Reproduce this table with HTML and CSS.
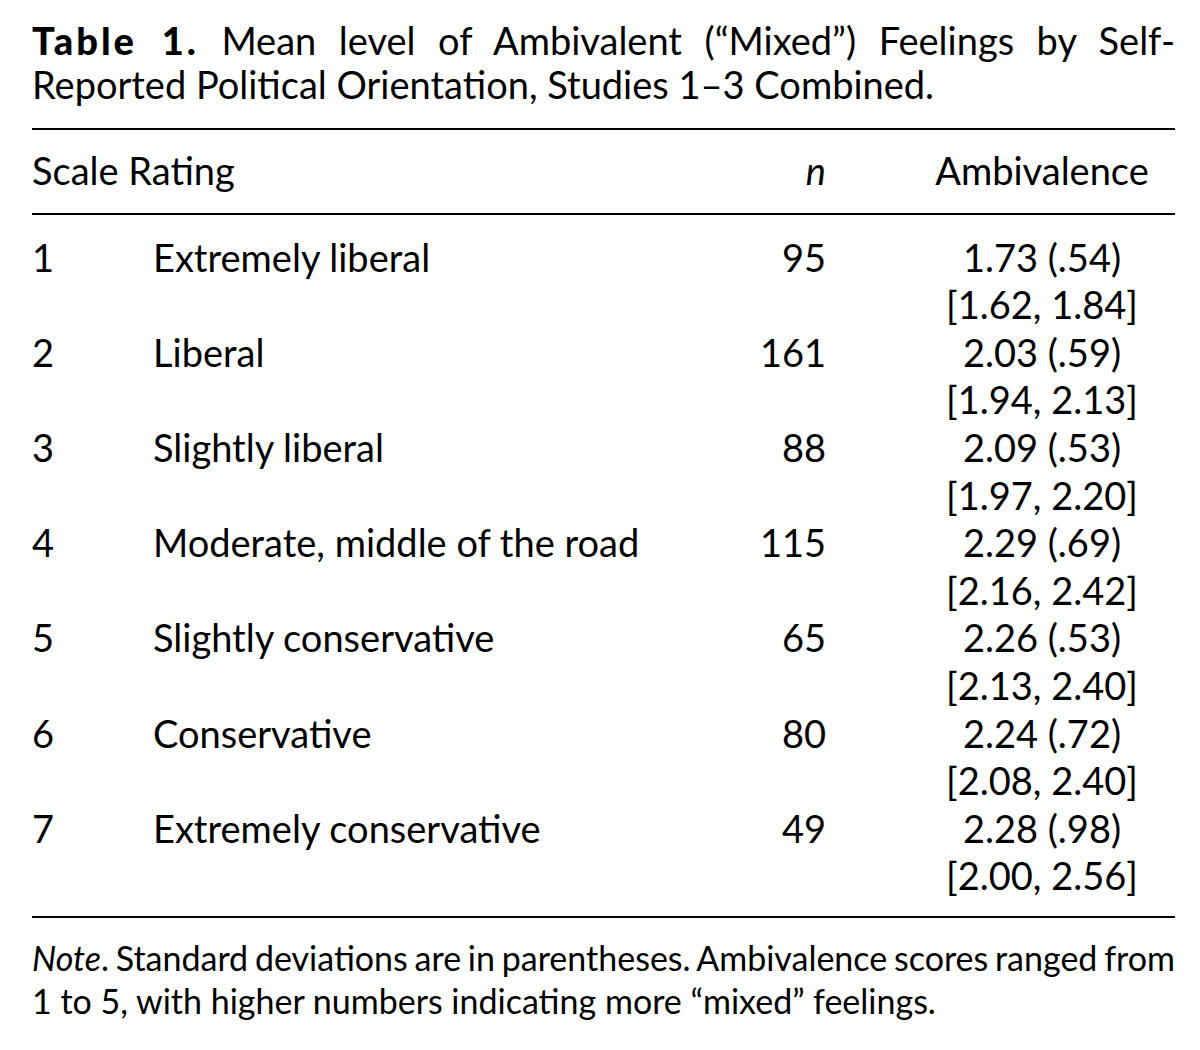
FILE: index.html
```html
<!DOCTYPE html>
<html lang="en">
<head>
<meta charset="utf-8">
<title>Table 1</title>
<link rel="stylesheet" href="styles.css">
</head>
<body>
<div class="page">
  <p class="caption"><span class="line just"><span class="label">Table 1.</span> Mean level of Ambivalent (“Mixed”) Feelings by Self-</span><span class="line">Reported Political Orientation, Studies 1–3 Combined.</span></p>
  <div class="table">
    <div class="row head">
      <div class="c-scale">Scale Rating</div>
      <div class="c-n"><i>n</i></div>
      <div class="c-amb">Ambivalence</div>
    </div>
    <div class="body">
      <div class="row">
        <div class="c-num">1</div>
        <div class="c-label">Extremely liberal</div>
        <div class="c-n">95</div>
        <div class="c-amb">1.73 (.54)<br>[1.62, 1.84]</div>
      </div>
      <div class="row">
        <div class="c-num">2</div>
        <div class="c-label">Liberal</div>
        <div class="c-n">161</div>
        <div class="c-amb">2.03 (.59)<br>[1.94, 2.13]</div>
      </div>
      <div class="row">
        <div class="c-num">3</div>
        <div class="c-label">Slightly liberal</div>
        <div class="c-n">88</div>
        <div class="c-amb">2.09 (.53)<br>[1.97, 2.20]</div>
      </div>
      <div class="row">
        <div class="c-num">4</div>
        <div class="c-label">Moderate, middle of the road</div>
        <div class="c-n">115</div>
        <div class="c-amb">2.29 (.69)<br>[2.16, 2.42]</div>
      </div>
      <div class="row">
        <div class="c-num">5</div>
        <div class="c-label">Slightly conservative</div>
        <div class="c-n">65</div>
        <div class="c-amb">2.26 (.53)<br>[2.13, 2.40]</div>
      </div>
      <div class="row">
        <div class="c-num">6</div>
        <div class="c-label">Conservative</div>
        <div class="c-n">80</div>
        <div class="c-amb">2.24 (.72)<br>[2.08, 2.40]</div>
      </div>
      <div class="row">
        <div class="c-num">7</div>
        <div class="c-label">Extremely conservative</div>
        <div class="c-n">49</div>
        <div class="c-amb">2.28 (.98)<br>[2.00, 2.56]</div>
      </div>
    </div>
  </div>
  <p class="note"><span class="line just tight"><i>Note</i>. Standard deviations are in parentheses. Ambivalence scores ranged from</span><span class="line">1 to 5, with higher numbers indicating more “mixed” feelings.</span></p>
</div>
</body>
</html>
```
FILE: styles.css
```css
html, body {
  margin: 0;
  padding: 0;
  background: #ffffff;
}

body {
  font-family: Lato, "Open Sans", "Liberation Sans", sans-serif;
  color: #000000;
  font-size: 38px;
}

.page {
  width: 1143px;
  padding: 18px 0 0 32px;
}

.line {
  display: block;
  white-space: nowrap;
}

.line.just {
  text-align: justify;
  text-align-last: justify;
}

.caption {
  margin: 0;
  line-height: 44px;
}

.caption .label {
  font-weight: 900;
  letter-spacing: 3px;
}

.table {
  margin-top: 22px;
  border-top: 2px solid #000;
  border-bottom: 2px solid #000;
}

.row {
  display: grid;
  grid-template-columns: 121px 1fr 100px 349px;
  line-height: 47.6px;
}

.row.head {
  padding: 17px 0 18px;
  border-bottom: 2px solid #000;
}

.row.head .c-scale {
  grid-column: 1 / 3;
}

.body {
  padding: 19px 0 16px;
}

.c-n {
  text-align: right;
}

.c-amb {
  padding-left: 83px;
  text-align: center;
}

.note {
  margin: 18px 0 0;
  font-size: 34px;
  line-height: 43px;
}

.note .tight {
  word-spacing: -2px;
}
```
